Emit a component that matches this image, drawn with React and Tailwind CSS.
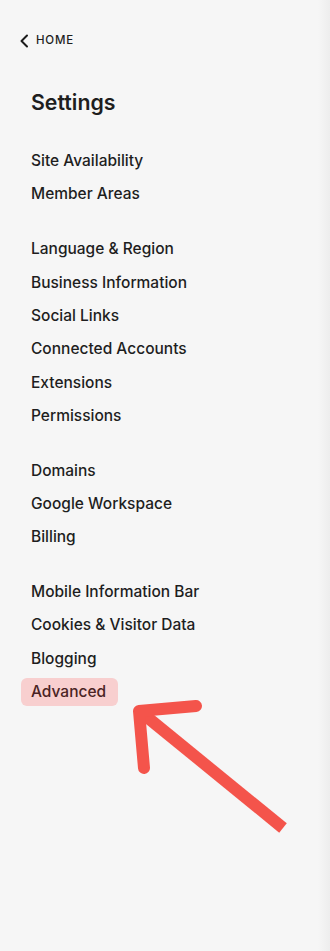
import React from "react";

const groups = [
  ["Site Availability", "Member Areas"],
  ["Language & Region", "Business Information", "Social Links", "Connected Accounts", "Extensions", "Permissions"],
  ["Domains", "Google Workspace", "Billing"],
  ["Mobile Information Bar", "Cookies & Visitor Data", "Blogging", "Advanced"],
];

export default function App() {
  return (
    <div
      className="relative flex min-h-[951px] w-[330px] bg-[#f6f6f6] text-[#1e1e1e]"
      style={{ fontFamily: "Inter, 'Noto Sans', sans-serif" }}
    >
      <div className="flex flex-1 flex-col">
        <div className="flex h-[16px] items-center mt-[33px] pl-[19px]">
          <svg width="11" height="14" viewBox="0 0 11 14" className="mr-[6px]">
            <path d="M8 1.5 L2.5 7 L8 12.5" fill="none" stroke="#1b1b1b" strokeWidth="2" strokeLinecap="round" strokeLinejoin="round" />
          </svg>
          <span className="text-[11.5px] font-medium tracking-[0.07em]">HOME</span>
        </div>
        <h1 className="mt-[39px] pl-[31px] text-[21.3px] leading-[28px] font-semibold">Settings</h1>
        <div className="mt-[28px] flex flex-col pl-[21px]">
          {groups.map((g, gi) => (
            <div key={gi} className={"flex flex-col " + (gi > 0 ? "mt-[21.5px]" : "")}>
              {g.map((item) => (
                <div key={item} className="flex h-[33.33px] items-center">
                  {item === "Advanced" ? (
                    <span className="rounded-[6px] bg-[#f8cfcf] pl-[10px] pr-[12px] h-[28px] flex items-center text-[15.5px] font-medium text-[#4a2424]">
                      {item}
                    </span>
                  ) : (
                    <span className="px-[10px] text-[15.5px] font-medium">{item}</span>
                  )}
                </div>
              ))}
            </div>
          ))}
        </div>
      </div>
      <div className="w-[12px] bg-gradient-to-r from-[#f6f6f6] to-[#ededed]" />
      <svg className="absolute left-0 top-0 pointer-events-none" width="330" height="951" viewBox="0 0 330 951">
        <line x1="283" y1="828" x2="142" y2="713" stroke="#f4544b" strokeWidth="12" strokeLinecap="butt" />
        <path d="M196 706 L139 711 L144 768" fill="none" stroke="#f4544b" strokeWidth="12" strokeLinecap="round" strokeLinejoin="round" />
      </svg>
    </div>
  );
}
